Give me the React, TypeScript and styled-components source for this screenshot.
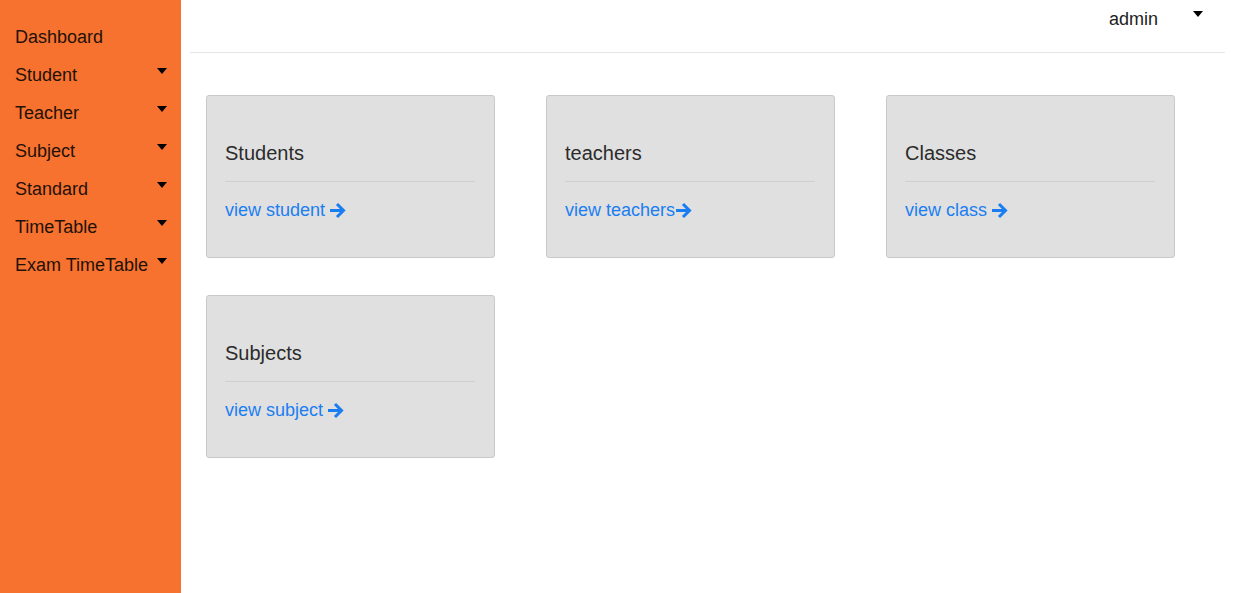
import React from "react";
import styled, { createGlobalStyle } from "styled-components";

const Global = createGlobalStyle`
  html, body { margin: 0; padding: 0; background: #fff; }
  body { font-family: "Liberation Sans", Arial, sans-serif; }
  * { box-sizing: border-box; }
`;

const Layout = styled.div`
  display: flex;
  min-height: 593px;
`;

const Sidebar = styled.nav`
  width: 181px;
  flex: 0 0 181px;
  background: #f7712f;
  padding-top: 18px;
  display: flex;
  flex-direction: column;
`;

const NavItem = styled.div`
  display: flex;
  align-items: center;
  justify-content: space-between;
  height: 38px;
  padding: 0 14px 0 15px;
  font-size: 18px;
  color: #1f1208;
  white-space: nowrap;
`;

const Caret = styled.span<{ $shift?: number }>`
  width: 0;
  height: 0;
  border-left: 5.5px solid transparent;
  border-right: 5.5px solid transparent;
  border-top: 6px solid #000;
  margin-top: ${(p) => p.$shift ?? -9}px;
`;

const Main = styled.main`
  flex: 1;
  display: flex;
  flex-direction: column;
`;

const Topbar = styled.header`
  height: 53px;
  margin: 0 9px 0 9px;
  border-bottom: 1px solid #e6e6e6;
  display: flex;
  align-items: flex-start;
  justify-content: flex-end;
  padding: 9px 22px 0 0;
  gap: 35px;
`;

const User = styled.span`
  font-size: 18px;
  color: #222;
  line-height: 20px;
`;

const Grid = styled.section`
  display: grid;
  grid-template-columns: repeat(3, 289px);
  column-gap: 51px;
  row-gap: 37px;
  padding: 42px 0 0 25px;
`;

const Card = styled.div`
  height: 163px;
  background: #e0e0e0;
  border: 1px solid #c9c9c9;
  border-radius: 3px;
  padding: 45px 19px 0 18px;
`;

const Title = styled.h3`
  margin: 0;
  font-size: 20px;
  line-height: 24px;
  font-weight: 400;
  color: #2b2b2b;
  padding-bottom: 16px;
  border-bottom: 1px solid #cfcfcf;
`;

const Link = styled.a`
  display: inline-flex;
  align-items: center;
  margin-top: 18px;
  font-size: 18px;
  line-height: 20px;
  color: #1a7ef2;
  text-decoration: none;
`;

const Arrow = styled.svg<{ $gap?: number }>`
  width: 17px;
  height: 17px;
  margin-left: ${(p) => p.$gap ?? 4}px;
`;

const ArrowIcon = ({ gap }: { gap?: number }) => (
  <Arrow $gap={gap} viewBox="0 0 17 17">
    <path d="M1 8.5 H14 M8 2 L14.5 8.5 L8 15" fill="none" stroke="#1a7ef2" strokeWidth="3" strokeLinecap="butt" strokeLinejoin="miter" />
  </Arrow>
);

const nav = [
  { label: "Dashboard", caret: false },
  { label: "Student", caret: true },
  { label: "Teacher", caret: true },
  { label: "Subject", caret: true },
  { label: "Standard", caret: true },
  { label: "TimeTable", caret: true },
  { label: "Exam TimeTable", caret: true },
];

const cards = [
  { title: "Students", link: "view student", gap: 4 },
  { title: "teachers", link: "view teachers", gap: 0 },
  { title: "Classes", link: "view class", gap: 4 },
  { title: "Subjects", link: "view subject", gap: 4 },
];

export default function App() {
  return (
    <>
      <Global />
      <Layout>
        <Sidebar>
          {nav.map((n) => (
            <NavItem key={n.label}>
              <span>{n.label}</span>
              {n.caret && <Caret />}
            </NavItem>
          ))}
        </Sidebar>
        <Main>
          <Topbar>
            <User>admin</User>
            <Caret $shift={2} />
          </Topbar>
          <Grid>
            {cards.map((c) => (
              <Card key={c.title}>
                <Title>{c.title}</Title>
                <Link href="#">
                  {c.link}
                  <ArrowIcon gap={c.gap} />
                </Link>
              </Card>
            ))}
          </Grid>
        </Main>
      </Layout>
    </>
  );
}
